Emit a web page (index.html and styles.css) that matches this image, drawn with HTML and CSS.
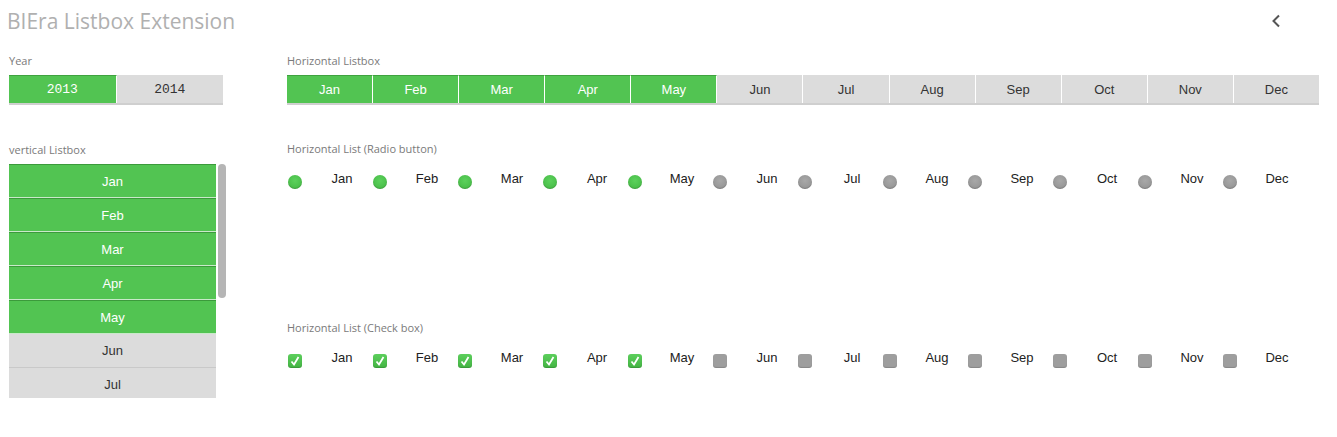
FILE: index.html
```html
<!DOCTYPE html>
<html>
<head>
<meta charset="utf-8">
<link rel="stylesheet" href="styles.css">
</head>
<body>
<div class="header">
  <div class="title">BIEra Listbox Extension</div>
  <svg class="back" width="12" height="14" viewBox="0 0 12 14"><path d="M9 1.5 L3.5 7 L9 12.5" fill="none" stroke="#555" stroke-width="2"/></svg>
</div>
<div class="main">
  <div class="left">
    <div class="label">Year</div>
    <div class="hbox year">
      <div class="cell sel">2013</div>
      <div class="cell">2014</div>
    </div>
    <div class="label vlabel">vertical Listbox</div>
    <div class="vwrap">
      <div class="vlist">
        <div class="vitem sel">Jan</div>
        <div class="vitem sel">Feb</div>
        <div class="vitem sel">Mar</div>
        <div class="vitem sel">Apr</div>
        <div class="vitem sel">May</div>
        <div class="vitem">Jun</div>
        <div class="vitem">Jul</div>
      </div>
      <div class="scroll"><div class="thumb"></div></div>
    </div>
  </div>
  <div class="right">
    <div class="label">Horizontal Listbox</div>
    <div class="hbox months">
      <div class="cell sel">Jan</div><div class="cell sel">Feb</div><div class="cell sel">Mar</div><div class="cell sel">Apr</div><div class="cell sel">May</div><div class="cell">Jun</div><div class="cell">Jul</div><div class="cell">Aug</div><div class="cell">Sep</div><div class="cell">Oct</div><div class="cell">Nov</div><div class="cell">Dec</div>
    </div>
    <div class="label rlabel">Horizontal List (Radio button)</div>
    <div class="opts radios">
      <div class="opt"><span class="radio on"></span><span class="otext">Jan</span></div>
      <div class="opt"><span class="radio on"></span><span class="otext">Feb</span></div>
      <div class="opt"><span class="radio on"></span><span class="otext">Mar</span></div>
      <div class="opt"><span class="radio on"></span><span class="otext">Apr</span></div>
      <div class="opt"><span class="radio on"></span><span class="otext">May</span></div>
      <div class="opt"><span class="radio"></span><span class="otext">Jun</span></div>
      <div class="opt"><span class="radio"></span><span class="otext">Jul</span></div>
      <div class="opt"><span class="radio"></span><span class="otext">Aug</span></div>
      <div class="opt"><span class="radio"></span><span class="otext">Sep</span></div>
      <div class="opt"><span class="radio"></span><span class="otext">Oct</span></div>
      <div class="opt"><span class="radio"></span><span class="otext">Nov</span></div>
      <div class="opt"><span class="radio"></span><span class="otext">Dec</span></div>
    </div>
    <div class="label clabel">Horizontal List (Check box)</div>
    <div class="opts checks">
      <div class="opt"><span class="check on"><svg width="14" height="14" viewBox="0 0 14 14"><path d="M3.5 7.5 L6 10.5 L10.5 3" fill="none" stroke="#fff" stroke-width="1.8"/></svg></span><span class="otext">Jan</span></div>
      <div class="opt"><span class="check on"><svg width="14" height="14" viewBox="0 0 14 14"><path d="M3.5 7.5 L6 10.5 L10.5 3" fill="none" stroke="#fff" stroke-width="1.8"/></svg></span><span class="otext">Feb</span></div>
      <div class="opt"><span class="check on"><svg width="14" height="14" viewBox="0 0 14 14"><path d="M3.5 7.5 L6 10.5 L10.5 3" fill="none" stroke="#fff" stroke-width="1.8"/></svg></span><span class="otext">Mar</span></div>
      <div class="opt"><span class="check on"><svg width="14" height="14" viewBox="0 0 14 14"><path d="M3.5 7.5 L6 10.5 L10.5 3" fill="none" stroke="#fff" stroke-width="1.8"/></svg></span><span class="otext">Apr</span></div>
      <div class="opt"><span class="check on"><svg width="14" height="14" viewBox="0 0 14 14"><path d="M3.5 7.5 L6 10.5 L10.5 3" fill="none" stroke="#fff" stroke-width="1.8"/></svg></span><span class="otext">May</span></div>
      <div class="opt"><span class="check"></span><span class="otext">Jun</span></div>
      <div class="opt"><span class="check"></span><span class="otext">Jul</span></div>
      <div class="opt"><span class="check"></span><span class="otext">Aug</span></div>
      <div class="opt"><span class="check"></span><span class="otext">Sep</span></div>
      <div class="opt"><span class="check"></span><span class="otext">Oct</span></div>
      <div class="opt"><span class="check"></span><span class="otext">Nov</span></div>
      <div class="opt"><span class="check"></span><span class="otext">Dec</span></div>
    </div>
  </div>
</div>
</body>
</html>
```
FILE: styles.css
```css
html, body { margin: 0; padding: 0; background: #fff; }
body { font-family: "Liberation Sans", Arial, sans-serif; width: 1337px; height: 437px; overflow: hidden; }

.header { height: 44px; display: flex; justify-content: space-between; align-items: flex-start; padding: 0 55px 0 7px; box-sizing: border-box; }
.title { font-family: "Open Sans", sans-serif; font-size: 21px; color: #b0b0b0; line-height: 26px; margin-top: 8px; }
.back { margin-top: 14px; }

.main { display: flex; padding: 0 0 0 9px; }
.left { width: 217px; display: flex; flex-direction: column; }
.right { width: 1032px; margin-left: 61px; display: flex; flex-direction: column; }

.label { font-family: "Open Sans", sans-serif; font-size: 11px; line-height: 16px; color: #7a7a7a; margin-top: 9px; height: 16px; margin-bottom: 6px; }
.vlabel { margin-top: 37px; }
.rlabel { margin-top: 36px; }
.clabel { margin-top: 125px; }

.hbox { display: flex; border-bottom: 2px solid #cfcfcf; }
.year { width: 214px; }
.cell { flex: 1; height: 28px; background: #dcdcdc; color: #333; display: flex; align-items: center; justify-content: center; font-size: 13px; box-sizing: border-box; border-right: 1px solid #fff; }
.cell:last-child { border-right: none; }
.cell.sel { background: #52c452; color: #fff; border-top: 1px solid #3fa23f; }
.year .cell { font-family: "Liberation Mono", monospace; font-size: 13px; }

.vwrap { display: flex; height: 234px; overflow: hidden; }
.vlist { width: 207px; }
.vitem { height: 33px; border-bottom: 1px solid #c9c9c9; background: #dcdcdc; color: #333; display: flex; align-items: center; justify-content: center; font-size: 13px; box-sizing: content-box; }
.vitem.sel { background: #52c452; color: #fff; height: 32px; border-top: 1px solid #3b9a3b; border-bottom: 1px solid #c9e9c9; }
.scroll { width: 8px; margin-left: 2px; }
.thumb { height: 134px; background: #b5b5b5; border-radius: 4px; }

.opts { display: flex; padding-left: 1px; }
.radios { margin-top: 12px; }
.checks { margin-top: 12px; }
.opt { width: 85px; display: flex; align-items: flex-start; height: 20px; }
.radio { width: 14px; height: 14px; border-radius: 50%; background: radial-gradient(circle at 50% 40%, #a8a8a8 0%, #999 60%, #8a8a8a 100%); flex: none; box-shadow: inset 0 -1px 1px rgba(0,0,0,0.15); }
.radio.on { background: radial-gradient(circle at 50% 40%, #5cd15c 0%, #4cc14c 60%, #3fae3f 100%); }
.check { width: 14px; height: 14px; border-radius: 3px; background: #9e9e9e; flex: none; box-shadow: inset 0 -1px 1px rgba(0,0,0,0.15); }
.check.on { background: linear-gradient(#5ccf5c, #43b443); }
.check svg { display: block; }
.otext { flex: 1; padding-left: 9px; text-align: center; font-size: 13px; color: #222; line-height: 16px; margin-top: -4px; }
```
